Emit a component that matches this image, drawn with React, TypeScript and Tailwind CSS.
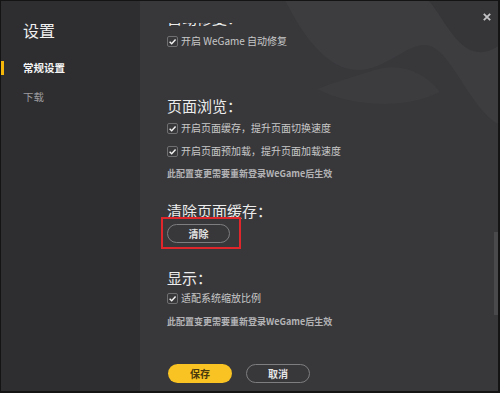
import React from "react";

function Check({ label }: { label: string }) {
  return (
    <div className="flex h-[16px] items-center">
      <div className="flex h-[11px] w-[11px] items-center justify-center rounded-[2px] border border-[#6f6f72]">
        <svg width="9" height="9" viewBox="0 0 10 10">
          <path d="M1.8 5.2 L4.1 7.4 L8.4 2.8" fill="none" stroke="#f2f2f2" strokeWidth="1.6" />
        </svg>
      </div>
      <span className="ml-[3px] text-[10px] leading-none text-[#c8c8c8]">{label}</span>
    </div>
  );
}

function Heading({ children, className = "" }: { children: React.ReactNode; className?: string }) {
  return (
    <div className={`flex h-[20px] items-center text-[15px] leading-none text-[#ececec] ${className}`}>
      {children}
    </div>
  );
}

function Note({ className = "" }: { className?: string }) {
  return (
    <div className={`flex h-[16px] items-center text-[9px] font-bold leading-none text-[#b4b4b6] ${className}`}>
      此配置变更需要重新登录WeGame后生效
    </div>
  );
}

export default function App() {
  return (
    <div className="flex h-[393px] w-[500px] border-t border-l border-r-2 border-b-2 border-[#141414] font-['Noto_Sans_CJK_SC',sans-serif]">
      {/* Sidebar */}
      <div className="flex w-[139px] flex-col bg-[#2e2e30] pt-[19px]">
        <div className="flex h-[20px] items-center pl-[22px] text-[16px] leading-none text-[#f0f0f0]">设置</div>
        <div className="mt-[21px] flex h-[14px] items-center">
          <div className="h-[14px] w-[3px] bg-[#f5b80a]" />
          <span className="ml-[19px] text-[10.5px] font-bold leading-none text-[#f4f4f4]">常规设置</span>
        </div>
        <div className="mt-[15px] flex h-[14px] items-center pl-[22px] text-[10.5px] leading-none text-[#9c9c9f]">下载</div>
      </div>

      {/* Main */}
      <div className="relative flex flex-1 flex-col overflow-hidden bg-[#38383b]">
        <svg className="pointer-events-none absolute left-0 top-0" width="358" height="390" viewBox="0 0 358 390">
          <g transform="translate(-140,-1)">
            <path d="M285,0 C300,30 325,70 358,70 C385,70 405,45 425,45 C450,45 468,108 500,125 L500,0 Z" fill="#3d3d40" />
            <path d="M428,0 C442,15 456,50 478,52 C488,53 495,48 500,45 L500,0 Z" fill="#363639" />
            <path d="M317,89 C345,104 400,112 440,92 C425,72 400,62 375,70 C355,76 335,82 317,89 Z" fill="#3c3c3f" />
          </g>
        </svg>

        {/* close */}
        <svg className="absolute left-[343px] top-[12px]" width="8" height="8" viewBox="0 0 8 8">
          <path d="M0.8 0.8 L7.2 7.2 M7.2 0.8 L0.8 7.2" stroke="#c4c4c6" strokeWidth="1.8" />
        </svg>

        {/* scroll indicator */}
        <div className="absolute left-[354px] top-[231px] h-[83px] w-[4px] bg-[#4a4a4d]" />

        {/* scroll viewport */}
        <div className="relative mt-[22px] h-[341px] overflow-hidden pl-[27px]">
          <div className="-mt-[16px] flex flex-col">
            <Heading>自动修复：</Heading>
            <div className="mt-[6px]">
              <Check label="开启 WeGame 自动修复" />
            </div>
            <Heading className="mt-[46px]">页面浏览：</Heading>
            <div className="mt-[5px]">
              <Check label="开启页面缓存，提升页面切换速度" />
            </div>
            <div className="mt-[7px]">
              <Check label="开启页面预加载，提升页面加载速度" />
            </div>
            <Note className="mt-[6px]" />
            <Heading className="mt-[19px]">清除页面缓存：</Heading>
            <div className="relative mt-[4px] w-[63px]">
              <div className="flex h-[19px] w-[63px] items-center justify-center rounded-full border border-[#7e7e81] text-[10px] font-bold leading-none text-[#e2e2e2]">
                清除
              </div>
              <div className="absolute -left-[6px] -top-[7px] h-[32px] w-[80px] border-2 border-[#e0262b]" />
            </div>
            <Heading className="mt-[24px]">显示：</Heading>
            <div className="mt-[3px]">
              <Check label="适配系统缩放比例" />
            </div>
            <Note className="mt-[7px]" />
          </div>
        </div>

        {/* footer */}
        <div className="flex h-[19px] items-center gap-[14px] pl-[28px]">
          <div className="flex h-[19px] w-[64px] items-center justify-center rounded-full bg-[#f9c323] text-[10px] font-bold leading-none text-[#4b3a0c]">
            保存
          </div>
          <div className="flex h-[19px] w-[64px] items-center justify-center rounded-full border border-[#7e7e81] text-[10px] font-bold leading-none text-[#e6e6e6]">
            取消
          </div>
        </div>
      </div>
    </div>
  );
}
